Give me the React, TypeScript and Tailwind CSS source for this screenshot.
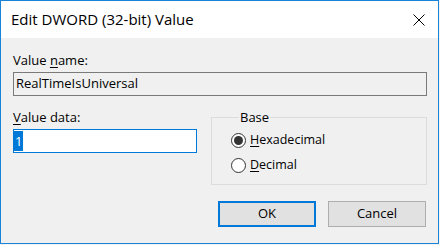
import React from 'react'

const font = { fontFamily: '"Open Sans", "Liberation Sans", sans-serif' }

function Radio({ checked, label, hot }: { checked: boolean; label: string; hot: string }) {
  return (
    <div className="flex items-center h-4">
      <span className="w-[15px] h-[15px] rounded-full border border-[#333333] bg-white flex items-center justify-center">
        {checked && <span className="w-[9px] h-[9px] rounded-full bg-[#333333]" />}
      </span>
      <span className="ml-[4px] text-[12.5px] leading-4 text-black">
        <span className="underline underline-offset-2">{hot}</span>
        {label}
      </span>
    </div>
  )
}

export default function App() {
  return (
    <div className="w-[440px] h-[245px] bg-[#f3f3f3]" style={font}>
      <div className="w-[439px] h-[244px] border border-[#1883d7] bg-[#f0f0f0] flex flex-col">
        {/* Title bar */}
        <div className="h-[37px] bg-white flex items-center justify-between pl-[10px] pr-[13px] shrink-0">
          <span className="text-[15px] text-black">Edit DWORD (32-bit) Value</span>
          <svg width="12" height="12" viewBox="0 0 12 12" className="mt-[1px]">
            <path d="M0.5 0.5 L11.5 11.5 M11.5 0.5 L0.5 11.5" stroke="#000" strokeWidth="1" />
          </svg>
        </div>

        {/* Body */}
        <div className="flex-1 pl-[12px] pr-[11px] pt-[14px] flex flex-col text-[13px]">
          <div className="leading-4 text-black">
            Value <span className="underline underline-offset-2">n</span>ame:
          </div>
          <div className="mt-1 h-6 border border-[#7a7a7a] bg-[#f0f0f0] flex items-center pl-[2px] text-black">
            RealTimeIsUniversal
          </div>

          <div className="mt-[13px] flex gap-[14px]">
            <div className="w-[184px]">
              <div className="leading-4 text-black">
                <span className="underline underline-offset-2">V</span>alue data:
              </div>
              <div className="mt-1 h-6 border border-[#0078d7] bg-white flex items-center">
                <span className="bg-[#0078d7] text-white leading-[20px] px-[1px] h-[20px]">1</span>
              </div>
            </div>
            <fieldset className="flex-1 h-[76px] border border-[#dcdcdc] pl-[19px] pr-2">
              <legend className="leading-4 text-black px-[1px] ml-[8px]">Base</legend>
              <div className="mt-[7px] flex flex-col gap-[9px]">
                <Radio checked hot="H" label="exadecimal" />
                <Radio checked={false} hot="D" label="ecimal" />
              </div>
            </fieldset>
          </div>

          <div className="mt-[16px] flex justify-end gap-[12px] pr-[1px]">
            <button className="w-[98px] h-[26px] border-2 border-[#0078d7] bg-[#e1e1e1] text-black">
              OK
            </button>
            <button className="w-[98px] h-[26px] border border-[#adadad] bg-[#e1e1e1] text-black">
              Cancel
            </button>
          </div>
        </div>
      </div>
    </div>
  )
}
